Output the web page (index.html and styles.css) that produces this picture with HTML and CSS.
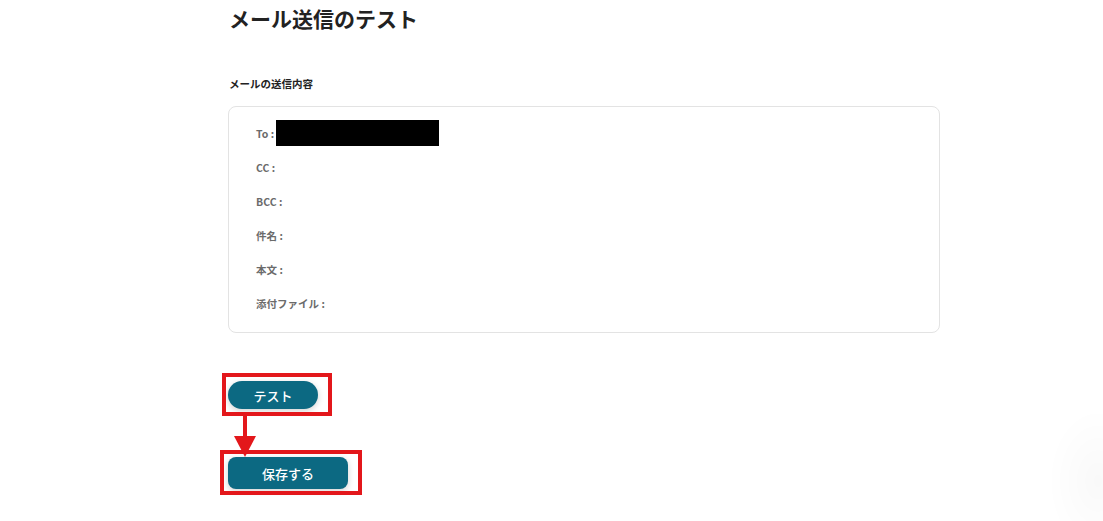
FILE: index.html
```html
<!DOCTYPE html>
<html lang="ja">
<head>
<meta charset="utf-8">
<title>メール送信のテスト</title>
<link rel="stylesheet" href="styles.css">
</head>
<body>
<main class="page">
  <h1 class="title">メール送信のテスト</h1>
  <h2 class="section-label">メールの送信内容</h2>
  <div class="card">
    <div class="row"><span class="label">To :</span><span class="redacted"></span></div>
    <div class="row"><span class="label">CC :</span></div>
    <div class="row"><span class="label">BCC :</span></div>
    <div class="row"><span class="label">件名 :</span></div>
    <div class="row"><span class="label">本文 :</span></div>
    <div class="row"><span class="label">添付ファイル :</span></div>
  </div>
  <div class="actions">
    <div class="annot annot-test"></div>
    <div class="annot annot-save"></div>
    <div class="arrow-line"></div>
    <div class="arrow-head"></div>
    <button class="btn btn-test">テスト</button>
    <button class="btn btn-save">保存する</button>
  </div>
</main>
<div class="corner-shade"></div>
</body>
</html>
```

FILE: styles.css
```css
html {
  overflow: hidden;
}

html, body {
  margin: 0;
  padding: 0;
  background: #ffffff;
  font-family: "Noto Sans CJK JP", "Noto Sans", "Liberation Sans", sans-serif;
  color: #222;
}

body {
  min-height: 521px;
}

.page {
  width: 712px;
  margin-left: 228px;
  padding-bottom: 32px;
  display: flex;
  flex-direction: column;
}

.title {
  margin: 2px 0 0 1px;
  font-size: 21px;
  line-height: 32px;
  font-weight: 700;
  color: #222;
}

.section-label {
  margin: 42px 0 0 1px;
  font-size: 10.5px;
  line-height: 16px;
  font-weight: 700;
  color: #222;
}

.card {
  margin-top: 14px;
  border: 1px solid #e3e3e3;
  border-radius: 8px;
  padding: 13px 27px 16px;
  display: flex;
  flex-direction: column;
  gap: 8px;
}

.row {
  height: 26px;
  display: flex;
  align-items: center;
  gap: 2px;
}

.label {
  font-size: 10.5px;
  font-weight: 700;
  color: #6b6b6b;
}

.redacted {
  width: 163px;
  height: 26px;
  background: #000;
}

.actions {
  position: relative;
  display: flex;
  flex-direction: column;
  align-items: flex-start;
  gap: 48px;
  margin-top: 48px;
}

.btn {
  border: none;
  color: #fff;
  background: #0c6982;
  font-family: inherit;
  font-size: 13px;
  font-weight: 500;
  box-shadow: 0 2px 6px rgba(0, 0, 0, 0.18);
  padding: 0;
  cursor: pointer;
}

.btn-test {
  width: 90px;
  height: 28px;
  border-radius: 14px;
}

.btn-save {
  width: 120px;
  height: 32px;
  border-radius: 8px;
}

.annot {
  position: absolute;
  border: 4px solid #e3171b;
  box-sizing: border-box;
  z-index: 2;
  pointer-events: none;
}

.annot-test {
  left: -6px;
  top: -8px;
  width: 110px;
  height: 43px;
}

.annot-save {
  left: -8px;
  top: 69px;
  width: 142px;
  height: 45px;
}

.arrow-line {
  position: absolute;
  left: 15px;
  top: 35px;
  width: 4px;
  height: 22px;
  background: #e3171b;
  z-index: 2;
}

.arrow-head {
  position: absolute;
  left: 6px;
  top: 55px;
  width: 0;
  height: 0;
  border-left: 11px solid transparent;
  border-right: 11px solid transparent;
  border-top: 21px solid #e3171b;
  z-index: 3;
}

.corner-shade {
  position: fixed;
  right: -50px;
  bottom: -40px;
  width: 110px;
  height: 160px;
  background: radial-gradient(ellipse at center, rgba(0, 0, 0, 0.025), rgba(0, 0, 0, 0) 65%);
  pointer-events: none;
}
```
